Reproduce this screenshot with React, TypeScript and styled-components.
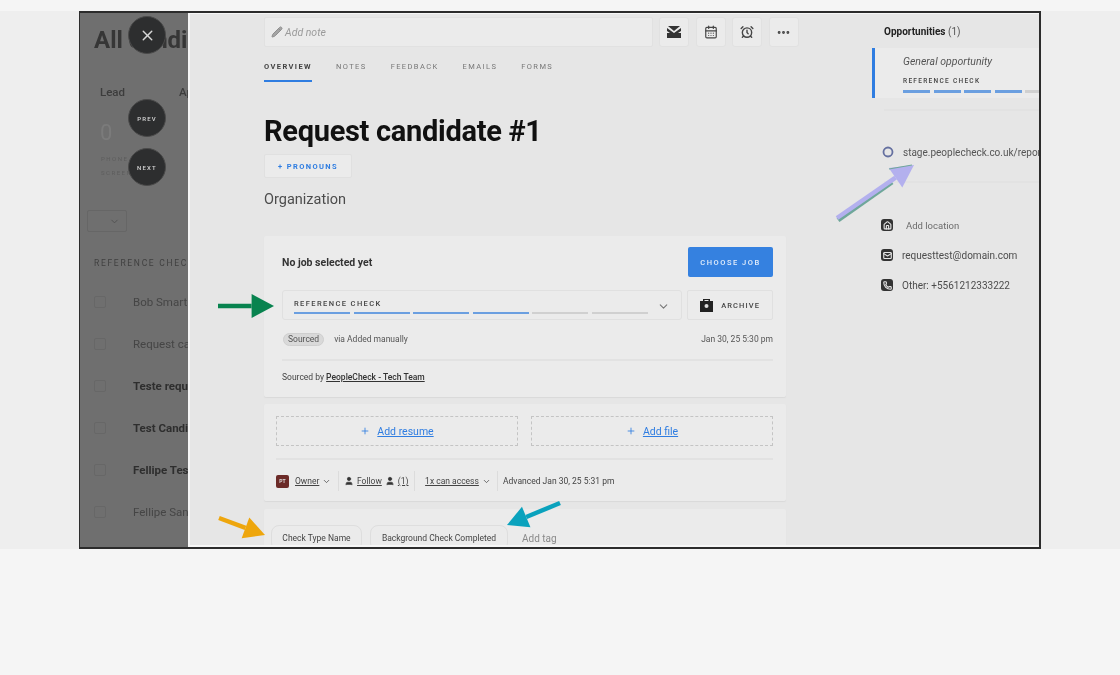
import React from "react";
import styled, { createGlobalStyle } from "styled-components";
import { AlarmClock, CalendarDays, ChevronDown, House, Mail, MoreHorizontal, Pencil, Phone, Plus, User, X } from "lucide-react";

const Global = createGlobalStyle`
  html, body { margin: 0; padding: 0; background: #f5f5f5; }
  body { font-family: Roboto, "Noto Sans", sans-serif; overflow: hidden; }
  #root { height: 675px; }
`;

const Page = styled.div`
  height: 675px;
  padding-top: 11px;
  box-sizing: border-box;
  background: #f5f5f5;
`;

const Band = styled.div`
  height: 538px;
  background: #eeeeee;
  display: flex;
  justify-content: center;
`;

const Frame = styled.div`
  position: relative;
  width: 962px;
  height: 538px;
  box-sizing: border-box;
  border: solid #2c2c2c;
  border-width: 2px 2px 2px 1px;
  display: flex;
  overflow: hidden;
  filter: blur(0.5px);
`;

const Backdrop = styled.aside`
  width: 108px;
  flex: none;
  background: #6f6f6f;
  color: #343434;
  padding: 13px 0 0 14px;
  box-sizing: border-box;
  overflow: hidden;
  white-space: nowrap;
`;

const BackTitle = styled.div`
  font-size: 24px;
  font-weight: 700;
  line-height: 28px;
  color: #363636;
`;

const LeadRow = styled.div`
  margin: 30px 0 0 6px;
  display: flex;
  gap: 54px;
  font-size: 11.5px;
  font-weight: 500;
  line-height: 16px;
  color: #3c3c3c;
`;

const BigZero = styled.div`
  margin: 20px 0 0 6px;
  font-size: 22px;
  line-height: 26px;
  color: #7b7b7b;
`;

const TinyBack = styled.div`
  margin: 6px 0 0 7px;
  font-size: 6px;
  line-height: 14px;
  letter-spacing: 1.5px;
  color: #5d5d5d;
`;

const BackSelect = styled.div`
  margin: 30px 0 0 -7px;
  width: 40px;
  height: 22px;
  box-sizing: border-box;
  border: 1px solid #666;
  border-radius: 2px;
  display: flex;
  align-items: center;
  justify-content: flex-end;
  padding-right: 6px;
  color: #505050;
`;

const BackHeading = styled.div`
  margin-top: 24px;
  font-size: 8.5px;
  line-height: 14px;
  letter-spacing: 1.7px;
  color: #404040;
`;

const BackList = styled.div`
  margin-top: 11px;
  display: flex;
  flex-direction: column;
`;

const BackRow = styled.div<{ $bold?: boolean }>`
  height: 42px;
  display: flex;
  align-items: center;
  gap: 27px;
  font-size: 11.5px;
  font-weight: ${(p) => (p.$bold ? 700 : 400)};
  color: ${(p) => (p.$bold ? "#2e2e2e" : "#454545")};
`;

const BackCheck = styled.span`
  width: 12px;
  height: 12px;
  box-sizing: border-box;
  border: 1px solid #676767;
  border-radius: 2px;
  flex: none;
`;

const RoundButton = styled.button<{ $top: number }>`
  position: absolute;
  left: 48px;
  top: ${(p) => p.$top}px;
  width: 38px;
  height: 38px;
  padding: 0;
  border-radius: 50%;
  border: 1px solid #4a4a4a;
  background: #2d2e2f;
  color: #d8d8d8;
  display: flex;
  align-items: center;
  justify-content: center;
  font: 500 6px Roboto, sans-serif;
  letter-spacing: 1.2px;
`;

const Drawer = styled.div`
  flex: 1;
  min-width: 0;
  box-sizing: border-box;
  background: #e6e6e6;
  border: solid #f6f6f6;
  border-width: 1px 0 2px 2px;
  display: flex;
  align-items: flex-start;
  overflow: hidden;
`;

const Main = styled.main`
  width: 540px;
  flex: none;
  margin-left: 74px;
  padding-top: 3px;
`;

const NoteRow = styled.div`
  display: flex;
  gap: 6px;
`;

const NoteInput = styled.div`
  width: 389px;
  flex: none;
  height: 30px;
  box-sizing: border-box;
  background: #ebebeb;
  border: 1px solid #e1e1e1;
  border-radius: 2px;
  display: flex;
  align-items: center;
  gap: 2px;
  padding-left: 6px;
  font-size: 10.5px;
  font-style: italic;
  color: #9a9a9a;
`;

const IconButtons = styled.div`
  display: flex;
  gap: 6.5px;
`;

const IconBox = styled.button`
  width: 30px;
  height: 30px;
  flex: none;
  padding: 0;
  box-sizing: border-box;
  background: #ebebeb;
  border: 1px solid #e1e1e1;
  border-radius: 3px;
  color: #454545;
  display: flex;
  align-items: center;
  justify-content: center;
`;

const Tabs = styled.nav`
  margin-top: 9px;
  display: flex;
  gap: 24px;
  height: 26px;
`;

const Tab = styled.div<{ $active?: boolean }>`
  height: 26px;
  box-sizing: border-box;
  padding-top: 5px;
  font-size: 7.5px;
  line-height: 12px;
  letter-spacing: 1.4px;
  font-weight: ${(p) => (p.$active ? 700 : 400)};
  color: ${(p) => (p.$active ? "#444" : "#777")};
  border-bottom: ${(p) => (p.$active ? "2.5px solid #2f7de1" : "none")};
`;

const Title = styled.h1`
  margin: 29px 0 0;
  font-size: 29px;
  line-height: 40px;
  font-weight: 700;
  color: #111;
  letter-spacing: -0.3px;
`;

const PronounsButton = styled.button`
  display: block;
  margin-top: 3px;
  width: 88px;
  height: 24px;
  padding: 0;
  box-sizing: border-box;
  background: #ebebeb;
  border: 1px solid #e0e0e0;
  border-radius: 2px;
  color: #2f7de1;
  font: 700 7.5px Roboto, sans-serif;
  letter-spacing: 1.4px;
`;

const Organization = styled.div`
  margin-top: 11px;
  font-size: 14.5px;
  line-height: 22px;
  color: #4c4c4c;
`;

const Card = styled.section<{ $top: number }>`
  width: 522px;
  margin-top: ${(p) => p.$top}px;
  box-sizing: border-box;
  background: #ebebeb;
  border-radius: 2px;
  box-shadow: 0 1px 1px #d9d9d9;
`;

const JobCard = styled(Card)`
  height: 161px;
  padding: 11px 13px 0 18px;
`;

const JobHead = styled.div`
  display: flex;
  justify-content: space-between;
  align-items: center;
  height: 30px;
`;

const Strong = styled.div`
  font-size: 10.5px;
  font-weight: 700;
  color: #333;
`;

const ChooseButton = styled.button`
  width: 85px;
  height: 30px;
  padding: 0;
  border: 0;
  border-radius: 2px;
  background: #3581e0;
  color: #e4eefb;
  font: 500 7.5px Roboto, sans-serif;
  letter-spacing: 1.5px;
`;

const StageRow = styled.div`
  margin-top: 13px;
  display: flex;
  gap: 5px;
`;

const StageSelect = styled.div`
  width: 401px;
  height: 30px;
  box-sizing: border-box;
  border: 1px solid #e0e0e0;
  border-radius: 3px;
  padding: 3px 11px 0 11px;
  display: flex;
  align-items: center;
  justify-content: space-between;
  color: #777;
`;

const StageLabel = styled.div<{ $small?: boolean }>`
  font-size: ${(p) => (p.$small ? 6.5 : 7.5)}px;
  line-height: 9px;
  letter-spacing: ${(p) => (p.$small ? 1.3 : 1.4)}px;
  font-weight: 500;
  color: #444;
  white-space: nowrap;
`;

const Bars = styled.div<{ $w: number; $gap: number }>`
  display: flex;
  gap: ${(p) => p.$gap}px;
  margin-top: 4px;
  > span { width: ${(p) => p.$w}px; }
`;

const Bar = styled.span<{ $on?: boolean }>`
  flex: none;
  height: 2.5px;
  background: ${(p) => (p.$on ? "#6b9fe0" : "#d0d0d0")};
`;

const ArchiveButton = styled.button`
  width: 86px;
  height: 30px;
  padding: 0;
  box-sizing: border-box;
  background: #ebebeb;
  border: 1px solid #e0e0e0;
  border-radius: 2px;
  display: flex;
  align-items: center;
  justify-content: center;
  gap: 8px;
  font: 500 7.5px Roboto, sans-serif;
  letter-spacing: 1.1px;
  color: #444;
`;

const MetaRow = styled.div`
  margin-top: 11px;
  display: flex;
  align-items: center;
  height: 16px;
  font-size: 8.5px;
  color: #555;
`;

const Pill = styled.span`
  background: #d9d9d9;
  border: 1px solid #cfcfcf;
  border-radius: 7px;
  padding: 0 4px;
  line-height: 11px;
  margin: 0 10px 0 1px;
`;

const Date = styled.span`
  margin-left: auto;
`;

const Rule = styled.hr`
  margin: 0;
  border: 0;
  height: 2px;
  background: #e2e2e2;
`;

const JobRule = styled(Rule)`
  margin-top: 12px;
`;

const SourcedLine = styled.div`
  margin-top: 8px;
  font-size: 8.5px;
  line-height: 16px;
  color: #444;
  u { color: #333; font-weight: 500; }
`;

const FilesCard = styled(Card)`
  height: 97px;
  padding: 12px 13px 0 12px;
`;

const DropRow = styled.div`
  display: flex;
  gap: 13px;
`;

const DropZone = styled.div`
  flex: 1;
  height: 30px;
  box-sizing: border-box;
  border: 1.5px dashed #c4c4c4;
  display: flex;
  align-items: center;
  justify-content: center;
  gap: 7px;
  font-size: 10.5px;
  color: #2f7de1;
`;

const FileRule = styled(Rule)`
  margin-top: 12px;
`;

const ActionRow = styled.div`
  margin-top: 11px;
  height: 20px;
  display: flex;
  align-items: center;
  font-size: 8.5px;
  color: #444;
  white-space: nowrap;
`;

const Avatar = styled.span`
  width: 13px;
  height: 13px;
  flex: none;
  border-radius: 2px;
  background: #6c2b28;
  color: #ddd;
  font-size: 5px;
  font-weight: 700;
  display: flex;
  align-items: center;
  justify-content: center;
  margin-right: 6px;
`;

const ActionGroup = styled.span<{ $width: number }>`
  display: flex;
  align-items: center;
  flex: none;
  gap: 3px;
  height: 20px;
  box-sizing: border-box;
  margin-right: 5px;
  border-right: 1px solid #dcdcdc;
  width: ${(p) => p.$width}px;
`;

const TagsCard = styled(Card)`
  height: 60px;
  padding: 16px 0 0 7px;
  display: flex;
  gap: 8px;
`;

const Tag = styled.div<{ $width: number }>`
  width: ${(p) => p.$width}px;
  height: 26px;
  box-sizing: border-box;
  border: 1px solid #dedede;
  border-radius: 8px;
  display: flex;
  align-items: center;
  justify-content: center;
  font-size: 8.5px;
  color: #444;
  white-space: nowrap;
`;

const AddTag = styled.div`
  margin-left: 6px;
  height: 26px;
  display: flex;
  align-items: center;
  font-size: 10px;
  color: #8a8a8a;
`;

const Side = styled.aside`
  flex: 1;
  min-width: 0;
  margin-left: 68px;
  padding-top: 10px;
  white-space: nowrap;
  overflow: hidden;
`;

const SideHeading = styled.div`
  margin-left: 12px;
  font-size: 10px;
  line-height: 16px;
  color: #555;
  b { color: #222; }
`;

const OpportunityCard = styled.div`
  margin-top: 8px;
  height: 50px;
  box-sizing: border-box;
  background: #ebebeb;
  border-left: 3px solid #2f7de1;
  padding: 7px 0 0 28px;
`;

const OppName = styled.div`
  font-size: 10.5px;
  font-style: italic;
  line-height: 14px;
  color: #555;
  margin-bottom: 8px;
`;

const SideRule = styled(Rule)<{ $top: number }>`
  margin: ${(p) => p.$top}px 0 0 12px;
`;

const LinkRow = styled.div`
  margin: 33px 0 0 10px;
  display: flex;
  align-items: center;
  gap: 9px;
  height: 16px;
  font-size: 10px;
  color: #555;
`;

const LinkIcon = styled.svg`
  width: 12px;
  height: 12px;
  flex: none;
`;

const ContactList = styled.div`
  margin: 34px 0 0 9px;
  display: flex;
  flex-direction: column;
  gap: 14px;
`;

const ContactRow = styled.div<{ $muted?: boolean }>`
  height: 16px;
  display: flex;
  align-items: center;
  gap: ${(p) => (p.$muted ? 13 : 9)}px;
  font-size: ${(p) => (p.$muted ? 9.5 : 10)}px;
  color: ${(p) => (p.$muted ? "#6c6c6c" : "#4c4c4c")};
`;

const ContactIcon = styled.span`
  width: 12px;
  height: 12px;
  flex: none;
  border-radius: 3px;
  background: #333;
  color: #e6e6e6;
  display: flex;
  align-items: center;
  justify-content: center;
`;

const ArrowLayer = styled.svg`
  position: absolute;
  left: -1px;
  top: -2px;
  width: 960px;
  height: 538px;
  pointer-events: none;
`;

/* Arrow drawn in page coordinates minus the frame's origin (80, 11) */
const Arrow = ({ x1, y1, x2, y2, color, w = 4.5, head = 14 }: { x1: number; y1: number; x2: number; y2: number; color: string; w?: number; head?: number }) => {
  const a = Math.atan2(y2 - y1, x2 - x1);
  const bx = x2 - Math.cos(a) * head * 1.6;
  const by = y2 - Math.sin(a) * head * 1.6;
  const nx = -Math.sin(a) * head * 0.85;
  const ny = Math.cos(a) * head * 0.85;
  return (
    <g transform="translate(-80 -11)">
      <line x1={x1} y1={y1} x2={bx} y2={by} stroke={color} strokeWidth={w} />
      {head > 0 && <polygon points={`${x2},${y2} ${bx + nx},${by + ny} ${bx - nx},${by - ny}`} fill={color} />}
    </g>
  );
};

const stageBars = (w: number, gap: number, total: number) => (
  <Bars $w={w} $gap={gap}>
    {Array.from({ length: total }, (_, i) => (
      <Bar key={i} $on={i < 4} />
    ))}
  </Bars>
);

const rows: [string, boolean][] = [
  ["Bob Smart", false],
  ["Request candidate", false],
  ["Teste request", true],
  ["Test Candidate", true],
  ["Fellipe Teste", true],
  ["Fellipe Santos", false],
];

const InboxGlyph = () => (
  <svg width="14" height="12" viewBox="0 0 14 12">
    <path d="M1 0h12L7 5z" fill="#333" />
    <path d="M0 2l7 5 7-5v3l-3 2h3v5H0V7h3L0 5z" fill="#333" />
  </svg>
);

const ArchiveGlyph = () => (
  <svg width="13" height="14" viewBox="0 0 13 14">
    <path d="M3 3V1h7v2h3v11H0V3zM4.500 3h4V2h-4z" fill="#222" fillRule="evenodd" />
    <circle cx="6.500" cy="8" r="2" fill="#ddd" />
  </svg>
);

export default function App() {
  return (
    <Page>
      <Global />
      <Band>
        <Frame>
          <Backdrop>
            <BackTitle>All candidates</BackTitle>
            <LeadRow>
              <span>Lead</span>
              <span>Applicant</span>
            </LeadRow>
            <BigZero>0</BigZero>
            <TinyBack>
              PHONE
              <br />
              SCREEN
            </TinyBack>
            <BackSelect>
              <ChevronDown size={11} />
            </BackSelect>
            <BackHeading>REFERENCE CHECK</BackHeading>
            <BackList>
              {rows.map(([name, bold]) => (
                <BackRow key={name} $bold={bold}>
                  <BackCheck />
                  {name}
                </BackRow>
              ))}
            </BackList>
          </Backdrop>
          <Drawer>
            <Main>
              <NoteRow>
                <NoteInput>
                  <Pencil size={12} color="#8f8f8f" fill="#a5a5a5" />
                  Add note
                </NoteInput>
                <IconButtons>
                  <IconBox><InboxGlyph /></IconBox>
                  <IconBox><CalendarDays size={14} /></IconBox>
                  <IconBox><AlarmClock size={14} strokeWidth={2.4} /></IconBox>
                  <IconBox><MoreHorizontal size={15} strokeWidth={2.6} /></IconBox>
                </IconButtons>
              </NoteRow>
              <Tabs>
                <Tab $active>OVERVIEW</Tab>
                <Tab>NOTES</Tab>
                <Tab>FEEDBACK</Tab>
                <Tab>EMAILS</Tab>
                <Tab>FORMS</Tab>
              </Tabs>
              <Title>Request candidate #1</Title>
              <PronounsButton>+ PRONOUNS</PronounsButton>
              <Organization>Organization</Organization>
              <JobCard $top={25}>
                <JobHead>
                  <Strong>No job selected yet</Strong>
                  <ChooseButton>CHOOSE JOB</ChooseButton>
                </JobHead>
                <StageRow>
                  <StageSelect>
                    <div>
                      <StageLabel>REFERENCE CHECK</StageLabel>
                      {stageBars(56, 3.5, 6)}
                    </div>
                    <ChevronDown size={13} />
                  </StageSelect>
                  <ArchiveButton>
                    <ArchiveGlyph />
                    ARCHIVE
                  </ArchiveButton>
                </StageRow>
                <MetaRow>
                  <Pill>Sourced</Pill>
                  via Added manually
                  <Date>Jan 30, 25 5:30 pm</Date>
                </MetaRow>
                <JobRule />
                <SourcedLine>
                  Sourced by <u>PeopleCheck - Tech Team</u>
                </SourcedLine>
              </JobCard>
              <FilesCard $top={7}>
                <DropRow>
                  <DropZone>
                    <Plus size={10} />
                    <u>Add resume</u>
                  </DropZone>
                  <DropZone>
                    <Plus size={10} />
                    <u>Add file</u>
                  </DropZone>
                </DropRow>
                <FileRule />
                <ActionRow>
                  <Avatar>PT</Avatar>
                  <ActionGroup $width={44}>
                    <u>Owner</u>
                    <ChevronDown size={9} />
                  </ActionGroup>
                  <ActionGroup $width={71}>
                    <User size={10} fill="#333" />
                    <u>Follow</u>
                    <User size={10} fill="#333" />
                    <u>(1)</u>
                  </ActionGroup>
                  <ActionGroup $width={78}>
                    &nbsp;<u>1x can access</u>
                    <ChevronDown size={9} />
                  </ActionGroup>
                  <span>Advanced Jan 30, 25 5:31 pm</span>
                </ActionRow>
              </FilesCard>
              <TagsCard $top={8}>
                <Tag $width={91}>Check Type Name</Tag>
                <Tag $width={138}>Background Check Completed</Tag>
                <AddTag>Add tag</AddTag>
              </TagsCard>
            </Main>
            <Side>
              <SideHeading>
                <b>Opportunities</b> (1)
              </SideHeading>
              <OpportunityCard>
                <OppName>General opportunity</OppName>
                <StageLabel $small>REFERENCE CHECK</StageLabel>
                {stageBars(27, 3.5, 6)}
              </OpportunityCard>
              <SideRule $top={11} />
              <LinkRow>
                <LinkIcon viewBox="0 0 12 12">
                  <circle cx="6" cy="6" r="4.500" fill="none" stroke="#6570a0" strokeWidth="1.8" />
                </LinkIcon>
                stage.peoplecheck.co.uk/report
              </LinkRow>
              <SideRule $top={21} />
              <ContactList>
                <ContactRow $muted>
                  <ContactIcon><House size={9} strokeWidth={3} /></ContactIcon>
                  Add location
                </ContactRow>
                <ContactRow>
                  <ContactIcon><Mail size={9} strokeWidth={3} /></ContactIcon>
                  requesttest@domain.com
                </ContactRow>
                <ContactRow>
                  <ContactIcon><Phone size={9} strokeWidth={3} /></ContactIcon>
                  Other: +5561212333222
                </ContactRow>
              </ContactList>
            </Side>
          </Drawer>
          <RoundButton $top={3} aria-label="Close">
            <X size={17} />
          </RoundButton>
          <RoundButton $top={86}>PREV</RoundButton>
          <RoundButton $top={135}>NEXT</RoundButton>
          <ArrowLayer viewBox="0 0 960 538">
            <Arrow x1={219} y1={306} x2={275} y2={306} color="#08834f" />
            <Arrow x1={839} y1={220} x2={893} y2={182} color="#6fa79a" w={5} head={0} />
            <Arrow x1={838} y1={218} x2={915} y2={165} color="#b3b0ee" />
            <Arrow x1={890} y1={169} x2={913} y2={165} color="#6fa79a" w={1} head={0} />
            <Arrow x1={220} y1={518} x2={266} y2={535} color="#eea60d" head={13} />
            <Arrow x1={561} y1={503} x2={508} y2={525} color="#0aa2bd" head={13} />
          </ArrowLayer>
        </Frame>
      </Band>
    </Page>
  );
}
